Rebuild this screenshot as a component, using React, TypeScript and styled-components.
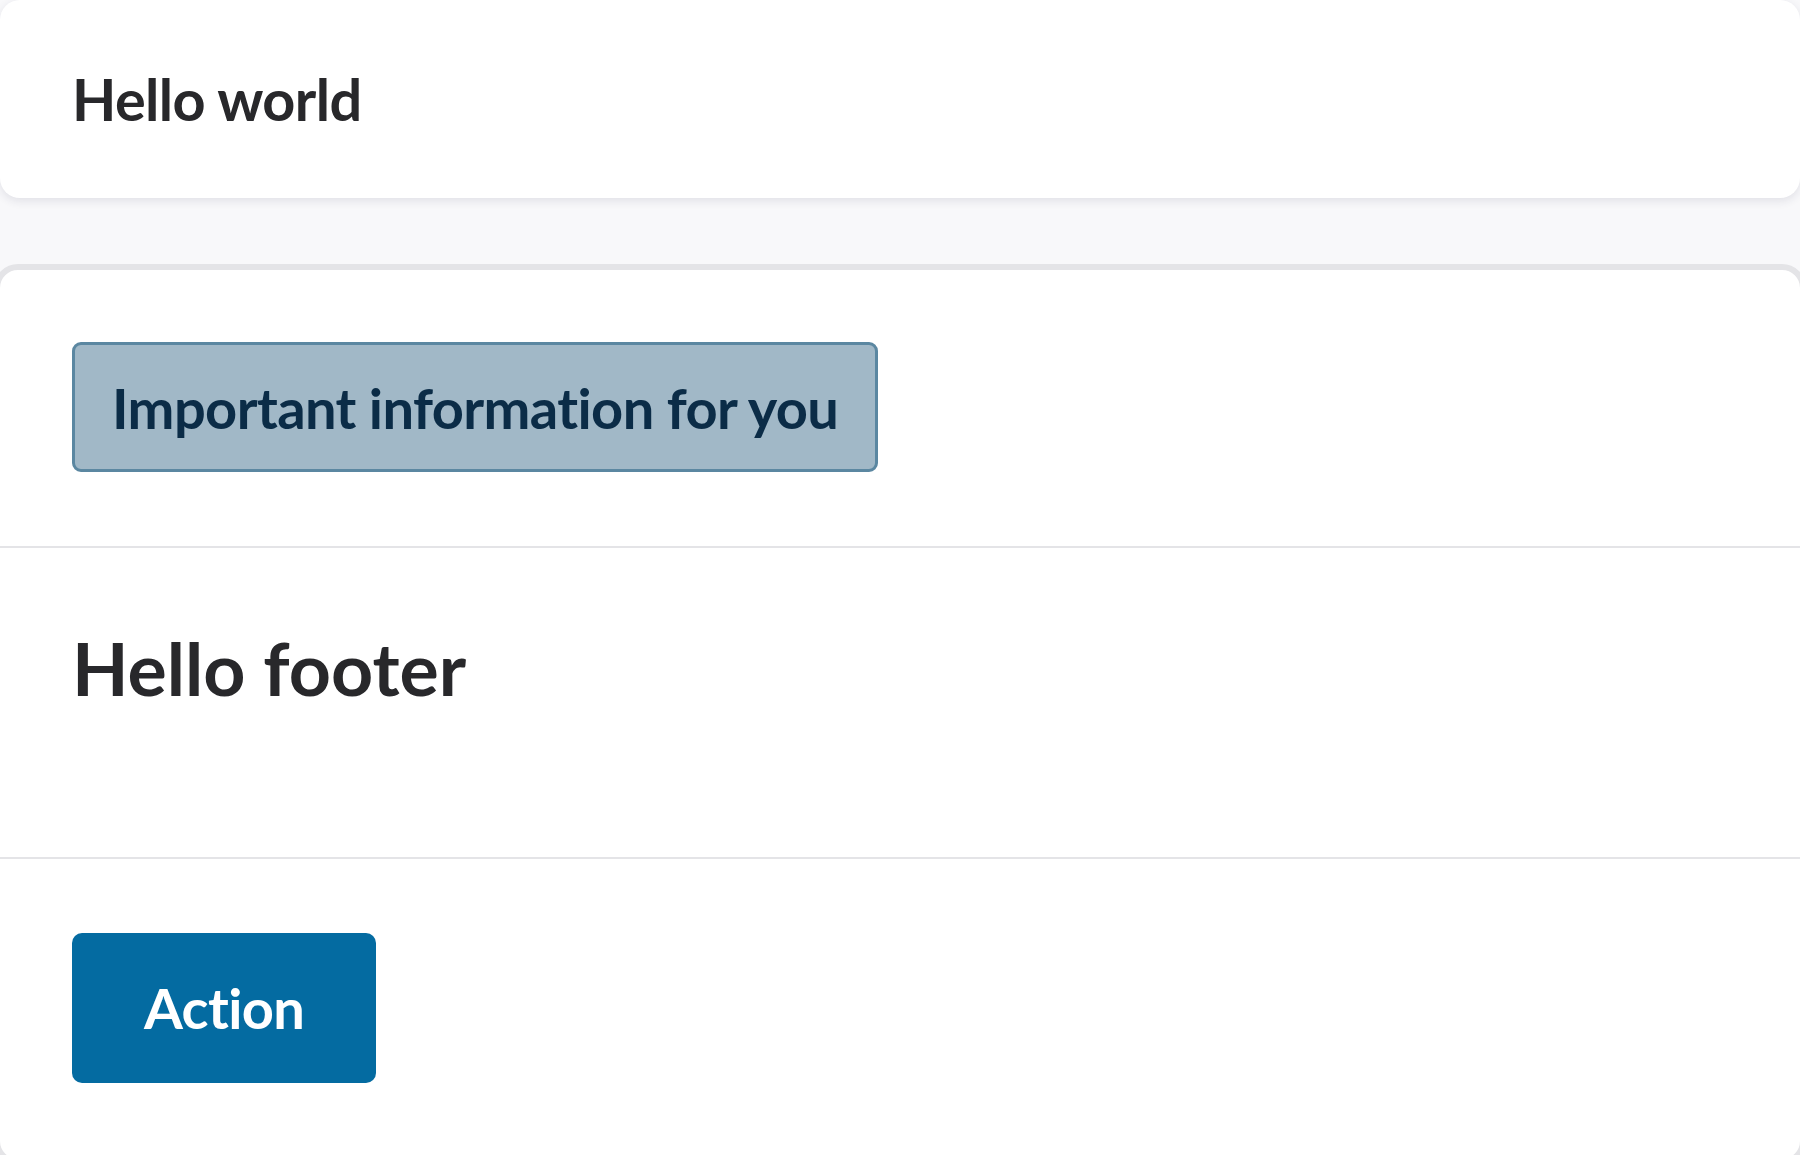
import React from "react";
import styled, { createGlobalStyle } from "styled-components";

const GlobalStyle = createGlobalStyle`
  html, body {
    margin: 0;
    padding: 0;
    background: #f8f8fa;
    overflow: hidden;
  }
  body {
    font-family: Lato, "Open Sans", sans-serif;
    font-variant-ligatures: none;
    color: #28282b;
  }
`;

const Page = styled.div`
  width: 1800px;
  display: flex;
  flex-direction: column;
  gap: 66px;
`;

const HeaderCard = styled.header`
  flex-shrink: 0;
  height: 198px;
  box-sizing: border-box;
  display: flex;
  align-items: center;
  padding: 0 72px;
  background: #ffffff;
  border-radius: 20px;
  box-shadow: 0 3px 10px rgba(40, 40, 70, 0.11);
`;

const Title = styled.h1`
  margin: 0;
  font-size: 57.6px;
  font-weight: 700;
  line-height: 1.2;
  letter-spacing: -0.6px;
  color: #28282b;
`;

const Card = styled.section`
  flex-shrink: 0;
  margin: 0 -6px;
  background: #ffffff;
  border: 6px solid #e4e4e7;
  border-radius: 24px;
  display: flex;
  flex-direction: column;
`;

const Section = styled.div<{ $divider?: boolean; $pad: string }>`
  padding: ${(p) => p.$pad};
  border-top: ${(p) => (p.$divider ? "2px solid #e4e4e7" : "none")};
  display: flex;
  align-items: flex-start;
`;

const Badge = styled.div`
  padding: 28.5px 37px;
  background: #a1b8c7;
  border: 3px solid #5b87a1;
  border-radius: 9px;
  color: #0b2c47;
  font-size: 56px;
  font-weight: 700;
  line-height: 1.2;
  letter-spacing: -0.6px;
`;

const FooterTitle = styled.h2`
  margin: 0;
  font-size: 73.5px;
  font-weight: 700;
  line-height: 1.2;
  color: #28282b;
`;

const ActionButton = styled.button`
  padding: 41px 72px;
  border: none;
  border-radius: 10px;
  background: #046ba1;
  color: #ffffff;
  font-family: Lato, "Open Sans", sans-serif;
  font-variant-ligatures: none;
  font-size: 56px;
  font-weight: 700;
  line-height: 1.2;
  letter-spacing: -0.6px;
  cursor: pointer;
`;

export default function App() {
  return (
    <>
      <GlobalStyle />
      <Page>
        <HeaderCard>
          <Title>Hello world</Title>
        </HeaderCard>
        <Card>
          <Section $pad="72px 72px 74px">
            <Badge>Important information for you</Badge>
          </Section>
          <Section $divider $pad="75.5px 72px 145.6px">
            <FooterTitle>Hello footer</FooterTitle>
          </Section>
          <Section $divider $pad="74px 72px 76px">
            <ActionButton>Action</ActionButton>
          </Section>
        </Card>
      </Page>
    </>
  );
}
